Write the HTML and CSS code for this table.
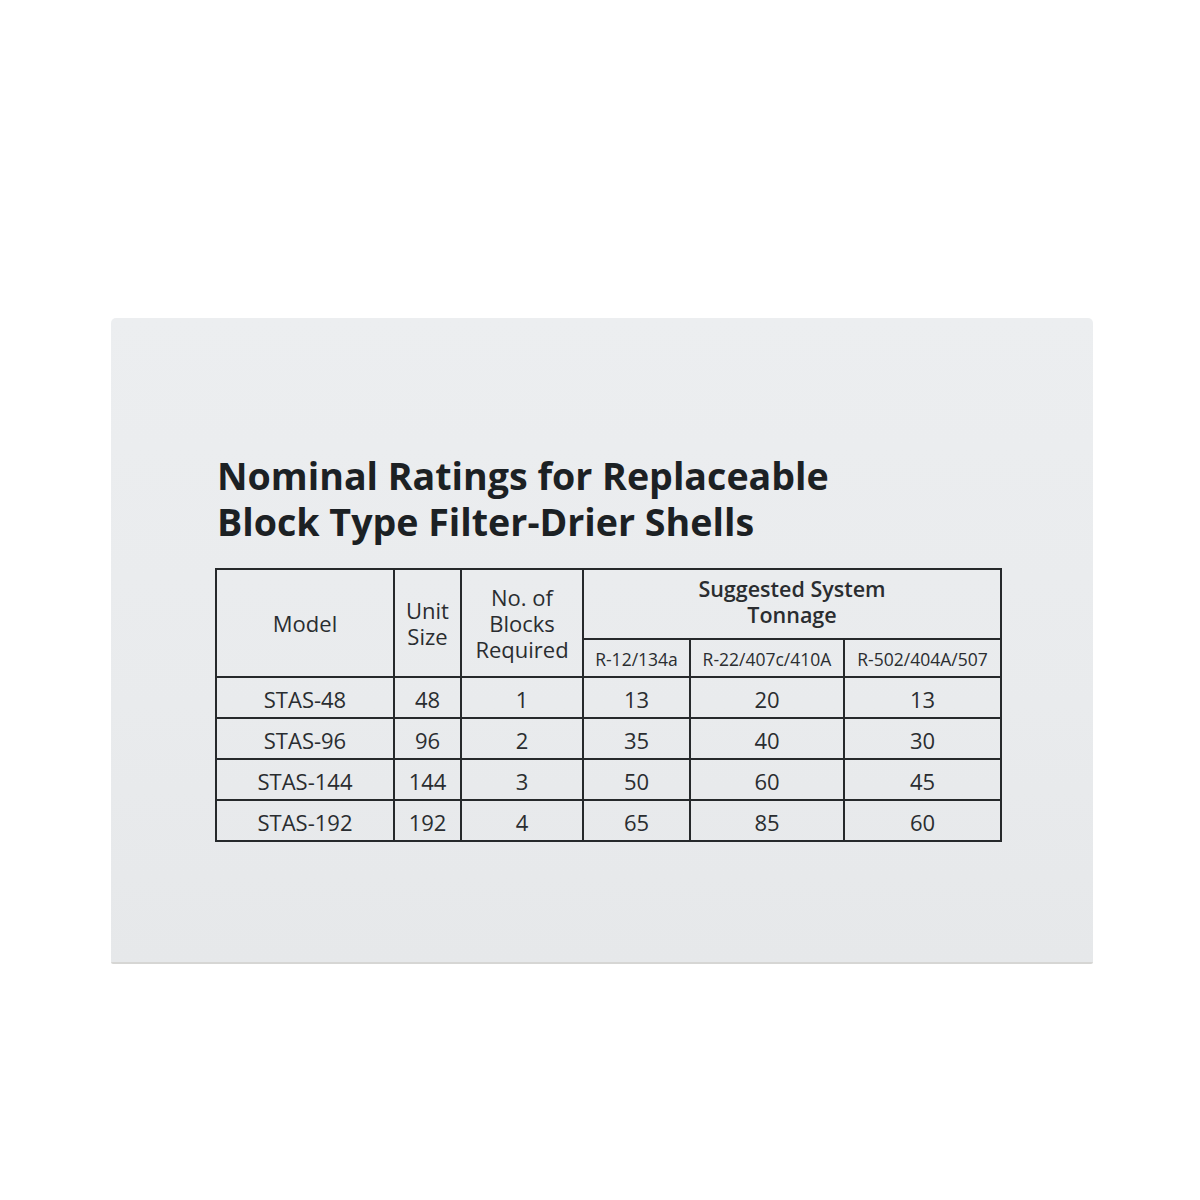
FILE: index.html
```html
<!DOCTYPE html>
<html lang="en">
<head>
<meta charset="utf-8">
<title>Nominal Ratings</title>
<link rel="stylesheet" href="styles.css">
</head>
<body>
<div class="box">
  <h1 class="title">Nominal Ratings for Replaceable<br>Block Type Filter-Drier Shells</h1>
  <table class="ratings">
    <colgroup>
      <col class="c-model">
      <col class="c-unit">
      <col class="c-blocks">
      <col class="c-r12">
      <col class="c-r22">
      <col class="c-r502">
    </colgroup>
    <thead>
      <tr class="h1row">
        <th rowspan="2">Model</th>
        <th rowspan="2">Unit<br>Size</th>
        <th rowspan="2">No. of<br>Blocks<br>Required</th>
        <th colspan="3" class="group">Suggested System<br>Tonnage</th>
      </tr>
      <tr class="h2row">
        <th class="sub">R-12/134a</th>
        <th class="sub">R-22/407c/410A</th>
        <th class="sub">R-502/404A/507</th>
      </tr>
    </thead>
    <tbody>
      <tr><td>STAS-48</td><td>48</td><td>1</td><td>13</td><td>20</td><td>13</td></tr>
      <tr><td>STAS-96</td><td>96</td><td>2</td><td>35</td><td>40</td><td>30</td></tr>
      <tr><td>STAS-144</td><td>144</td><td>3</td><td>50</td><td>60</td><td>45</td></tr>
      <tr><td>STAS-192</td><td>192</td><td>4</td><td>65</td><td>85</td><td>60</td></tr>
    </tbody>
  </table>
</div>
</body>
</html>
```
FILE: styles.css
```css
html, body {
  margin: 0;
  padding: 0;
  background: #ffffff;
}
body {
  width: 1200px;
  height: 1200px;
  font-family: "Open Sans", "Noto Sans", sans-serif;
  color: #25292c;
  padding-top: 318px;
  box-sizing: border-box;
}
.box {
  margin-left: 111px;
  width: 982px;
  height: 646px;
  box-sizing: border-box;
  background: linear-gradient(180deg, #eceef0 0%, #e9ebed 60%, #e6e8ea 100%);
  border-radius: 5px 5px 2px 2px;
  border-bottom: 2px solid #d6d6d4;
  padding: 135px 0 0 104px;
}
.title {
  margin: 0 0 23px 2px;
  font-size: 37.6px;
  line-height: 46px;
  font-weight: 700;
  color: #1c2124;
  letter-spacing: 0;
}
.ratings {
  border-collapse: collapse;
  table-layout: fixed;
  width: 785px;
  color: #2a2d30;
}
.c-model { width: 178px; }
.c-unit { width: 67px; }
.c-blocks { width: 122px; }
.c-r12 { width: 107px; }
.c-r22 { width: 154px; }
.c-r502 { width: 157px; }
.ratings th, .ratings td {
  border: 2px solid #26292b;
  padding: 0;
  text-align: center;
  font-weight: 400;
}
.ratings th {
  font-size: 22px;
  line-height: 26px;
}
.h1row { height: 70px; }
.h2row { height: 38px; }
.ratings th.group {
  font-weight: 600;
  font-size: 21.5px;
  line-height: 26px;
  padding-bottom: 4px;
}
.ratings th.sub {
  font-size: 17.5px;
  line-height: 20px;
  padding-top: 2px;
}
.ratings td {
  height: 37px;
  font-size: 22px;
  line-height: 26px;
  padding-top: 2px;
}
```
